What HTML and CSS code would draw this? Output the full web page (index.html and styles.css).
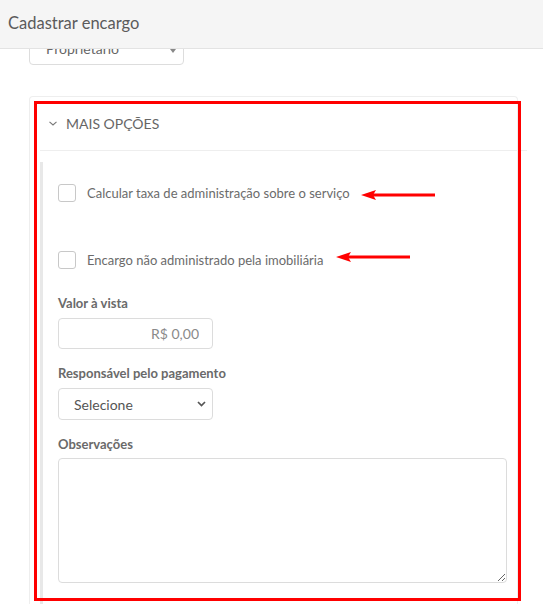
FILE: index.html
```html
<!doctype html>
<html>
  <head>
    <meta charset="utf-8" />
    <link rel="stylesheet" href="styles.css">
  </head>
  <body>
    <div class="topbar">
      <div class="topbar-title">Cadastrar encargo</div>
    </div>

    <div class="content">
      <div class="owner-field">
        <select class="owner-select">
          <option>Proprietário</option>
        </select>
      </div>

      <div class="panel">
        <div class="panel-header">
          <svg class="panel-chevron" width="8" height="5" viewBox="0 0 8 5">
            <path d="M0.5 0.8 L4 4 L7.5 0.8" fill="none" stroke="#777" stroke-width="1.1" />
          </svg>
          <span class="panel-title">MAIS OPÇÕES</span>
        </div>

        <div class="panel-body">
          <div class="options">
            <label class="check-row check-first">
              <span class="checkbox"></span>
              <span class="check-label">Calcular taxa de administração sobre o serviço</span>
            </label>

            <label class="check-row check-second">
              <span class="checkbox"></span>
              <span class="check-label">Encargo não administrado pela imobiliária</span>
            </label>

            <div class="form-group">
              <div class="field-label">Valor à vista</div>
              <input class="money-input" type="text" placeholder="R$ 0,00" />
            </div>

            <div class="form-group">
              <div class="field-label">Responsável pelo pagamento</div>
              <div class="select-wrap">
                <select class="form-select">
                  <option>Selecione</option>
                </select>
                <svg class="select-chevron" width="9" height="6" viewBox="0 0 9 6">
                  <path d="M1 1 L4.5 4.5 L8 1" fill="none" stroke="#555" stroke-width="1.7" />
                </svg>
              </div>
            </div>

            <div class="form-group">
              <div class="field-label">Observações</div>
              <textarea class="notes"></textarea>
            </div>
          </div>
        </div>
      </div>
    </div>

    <div class="highlight-box"></div>

    <svg class="arrow arrow-first" width="76" height="12" viewBox="0 0 76 12">
      <polygon points="0,6 15,1 12,6 15,11" fill="#ff0000" />
      <rect x="12" y="4.5" width="62" height="3" fill="#ff0000" />
    </svg>
    <svg class="arrow arrow-second" width="76" height="12" viewBox="0 0 76 12">
      <polygon points="0,6 15,1 12,6 15,11" fill="#ff0000" />
      <rect x="12" y="4.5" width="62" height="3" fill="#ff0000" />
    </svg>
  </body>
</html>
```

FILE: styles.css
```css
* {
  margin: 0;
  padding: 0;
  box-sizing: border-box;
}

body {
  width: 543px;
  height: 604px;
  overflow: hidden;
  font-family: Lato, 'Open Sans', sans-serif;
  background: white;
  color: #666;
  position: relative;
}

.topbar {
  position: relative;
  z-index: 2;
  height: 49px;
  background: #f5f5f5;
  border-bottom: 1px solid #e3e3e3;
  display: flex;
  align-items: center;
  padding-left: 8px;
}

.topbar-title {
  font-size: 16.5px;
  color: #5b5b5b;
  margin-top: -2px;
}

.content {
  padding-left: 29px;
}

.owner-field {
  margin-top: -18px;
  position: relative;
  width: 155px;
}

.owner-field::after {
  content: '';
  position: absolute;
  right: 8px;
  top: 18px;
  border-left: 3px solid transparent;
  border-right: 3px solid transparent;
  border-top: 4px solid #888;
}

.owner-select {
  appearance: none;
  width: 155px;
  height: 34px;
  border: 1px solid #ddd;
  border-radius: 4px;
  background: white;
  font-family: inherit;
  font-size: 14px;
  color: #666;
  padding-left: 16px;
}

.panel {
  margin-top: 31px;
  width: 489px;
  border: 1px solid #eeeeee;
  border-bottom: none;
  border-radius: 4px 4px 0 0;
}

.panel-header {
  height: 53px;
  display: flex;
  align-items: center;
  padding-left: 19px;
  gap: 9px;
}

.panel-chevron {
  margin-top: -1px;
}

.panel-title {
  font-size: 14px;
  color: #666;
}

.panel-body {
  margin-left: 10px;
  margin-right: -10px;
  border-top: 1px solid #eeeeee;
  padding-top: 11px;
}

.options {
  border-left: 3px solid #e8e8e8;
  padding-left: 15px;
  padding-bottom: 40px;
}

.check-row {
  display: flex;
  align-items: center;
  gap: 11px;
  height: 17px;
}

.check-first {
  padding-top: 22px;
  height: 39px;
}

.check-second {
  margin-top: 50px;
}

.checkbox {
  width: 18px;
  height: 18px;
  border: 1px solid #c8c8c8;
  border-radius: 3px;
  background: white;
  flex-shrink: 0;
}

.check-label {
  font-size: 13px;
  color: #6b6b6b;
}

.form-group {
  margin-top: 16px;
}

.check-second + .form-group {
  margin-top: 27px;
}

.field-label {
  font-size: 13px;
  font-weight: 700;
  color: #6a6a6a;
  line-height: 16px;
  margin-bottom: 7px;
}

.money-input {
  width: 155px;
  height: 31px;
  border: 1px solid #dcdcdc;
  border-radius: 4px;
  font-family: inherit;
  font-size: 14px;
  text-align: right;
  padding-right: 13px;
  color: #888;
}

.money-input::placeholder {
  color: #8a8a8a;
}

.select-wrap {
  position: relative;
  width: 155px;
}

.form-select {
  appearance: none;
  width: 155px;
  height: 32px;
  border: 1px solid #dcdcdc;
  border-radius: 4px;
  background: white;
  font-family: inherit;
  font-size: 14px;
  color: #555;
  padding-left: 15px;
}

.select-chevron {
  position: absolute;
  right: 7px;
  top: 13px;
}

.notes {
  display: block;
  width: 449px;
  height: 125px;
  border: 1px solid #dcdcdc;
  border-radius: 4px;
  font-family: inherit;
  margin-top: -1px;
}

.highlight-box {
  position: absolute;
  left: 34px;
  top: 101px;
  width: 487px;
  height: 500px;
  border: 3px solid #ff0000;
  pointer-events: none;
}

.arrow {
  position: absolute;
}

.arrow-first {
  left: 361px;
  top: 189px;
}

.arrow-second {
  left: 336px;
  top: 251px;
}
```
